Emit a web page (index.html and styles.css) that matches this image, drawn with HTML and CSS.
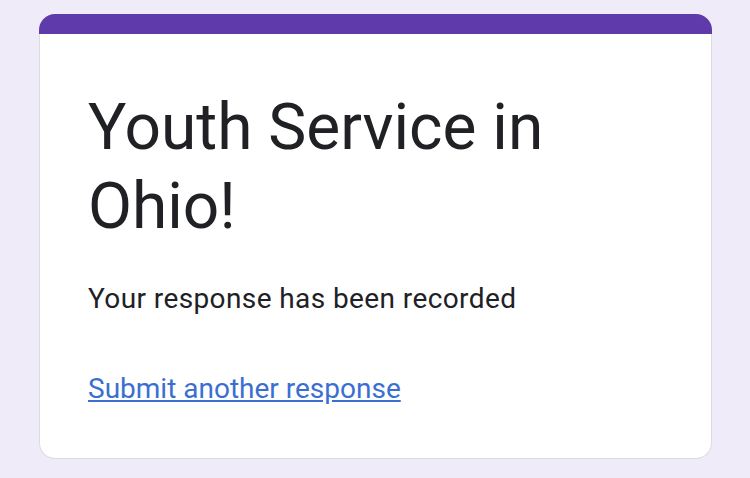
FILE: index.html
```html
<!DOCTYPE html>
<html>
<head>
<meta charset="utf-8">
<link rel="stylesheet" href="styles.css">
</head>
<body>
<div class="page">
  <div class="card">
    <div class="card-top"></div>
    <div class="card-body">
      <h1 class="title">Youth Service in Ohio!</h1>
      <p class="message">Your response has been recorded</p>
      <a class="link" href="#">Submit another response</a>
    </div>
  </div>
</div>
</body>
</html>
```
FILE: styles.css
```css
html, body {
  margin: 0;
  padding: 0;
  background: #f0ebf8;
  font-family: Roboto, "Noto Sans", Arial, sans-serif;
}
.page {
  padding: 14px 38px 0 39px;
}
.card {
  display: flex;
  flex-direction: column;
}
.card-top {
  height: 20px;
  background: #5f3aab;
  border-radius: 16px 16px 0 0;
}
.card-body {
  background: #fff;
  border: 1px solid #dadce0;
  border-top: none;
  border-radius: 0 0 16px 16px;
  padding: 54px 48px 49px 48px;
  display: flex;
  flex-direction: column;
  align-items: flex-start;
}
.title {
  margin: 0;
  font-size: 64px;
  font-weight: 400;
  line-height: 79px;
  color: #202124;
}
.message {
  margin: 33px 0 0 0;
  font-size: 28px;
  line-height: 40px;
  letter-spacing: 0.4px;
  color: #202124;
}
.link {
  margin-top: 50px;
  font-size: 28px;
  line-height: 40px;
  color: #3a6fd1;
  text-decoration: underline;
}
```
